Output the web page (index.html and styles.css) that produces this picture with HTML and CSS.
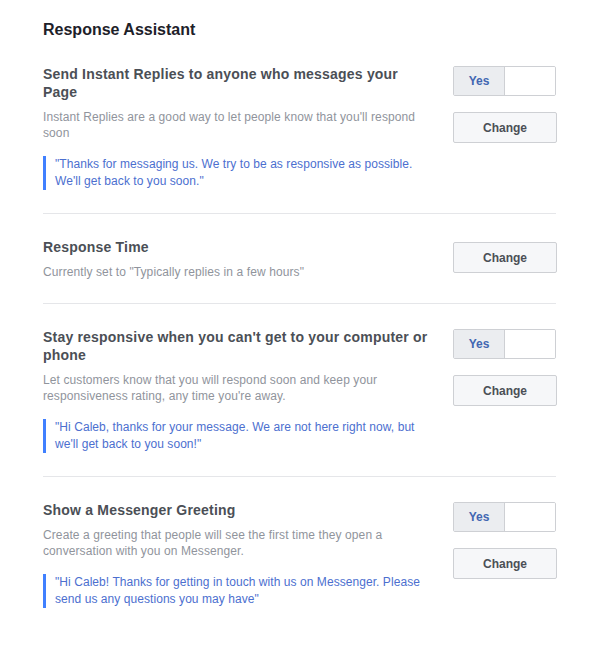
FILE: index.html
```html
<!DOCTYPE html>
<html lang="en">
<head>
    <meta charset="UTF-8">
    <title>Response Assistant</title>
    <link rel="stylesheet" href="styles.css">
</head>
<body>
    <div class="panel">
        <h1>Response Assistant</h1>

        <section class="setting">
            <div class="setting-text">
                <h2>Send Instant Replies to anyone who messages your Page</h2>
                <p class="desc">Instant Replies are a good way to let people know that you'll respond soon</p>
                <blockquote>"Thanks for messaging us. We try to be as responsive as possible. We'll get back to you soon."</blockquote>
            </div>
            <div class="setting-actions">
                <div class="toggle"><span class="toggle-on">Yes</span><span class="toggle-off"></span></div>
                <button class="btn">Change</button>
            </div>
        </section>

        <section class="setting">
            <div class="setting-text">
                <h2>Response Time</h2>
                <p class="desc">Currently set to "Typically replies in a few hours"</p>
            </div>
            <div class="setting-actions single">
                <button class="btn">Change</button>
            </div>
        </section>

        <section class="setting">
            <div class="setting-text">
                <h2>Stay responsive when you can't get to your computer or phone</h2>
                <p class="desc">Let customers know that you will respond soon and keep your responsiveness rating, any time you're away.</p>
                <blockquote>"Hi Caleb, thanks for your message. We are not here right now, but we'll get back to you soon!"</blockquote>
            </div>
            <div class="setting-actions">
                <div class="toggle"><span class="toggle-on">Yes</span><span class="toggle-off"></span></div>
                <button class="btn">Change</button>
            </div>
        </section>

        <section class="setting">
            <div class="setting-text">
                <h2>Show a Messenger Greeting</h2>
                <p class="desc">Create a greeting that people will see the first time they open a conversation with you on Messenger.</p>
                <blockquote>"Hi Caleb! Thanks for getting in touch with us on Messenger. Please send us any questions you may have"</blockquote>
            </div>
            <div class="setting-actions">
                <div class="toggle"><span class="toggle-on">Yes</span><span class="toggle-off"></span></div>
                <button class="btn">Change</button>
            </div>
        </section>
    </div>
</body>
</html>
```

FILE: styles.css
```css
:root {
    --title: #4b4f56;
    --muted: #90949c;
    --quote: #4c6fcf;
    --accent: #4080ff;
    --line: #e5e6e9;
    --border: #ced0d4;
}

* {
    margin: 0;
    padding: 0;
    box-sizing: border-box;
}

body {
    font-family: 'Liberation Sans', Arial, sans-serif;
    background: #fff;
    color: var(--title);
}

.panel {
    width: 556px;
    padding: 20px 0 0 43px;
}

h1 {
    font-size: 16px;
    line-height: 20px;
    font-weight: bold;
    color: #1d2129;
    margin-bottom: 15px;
}

.setting {
    display: flex;
    gap: 20px;
    padding: 24px 0 23px;
    border-bottom: 1px solid var(--line);
}

.setting:first-of-type {
    padding-top: 10px;
}

.setting:last-of-type {
    border-bottom: none;
}

.setting-text {
    width: 390px;
}

h2 {
    font-size: 14px;
    line-height: 18px;
    font-weight: bold;
    color: var(--title);
    letter-spacing: 0.2px;
    margin-bottom: 8px;
}

.desc {
    font-size: 12px;
    line-height: 16px;
    letter-spacing: 0.1px;
    color: var(--muted);
}

blockquote {
    margin-top: 15px;
    padding-left: 9px;
    border-left: 3px solid var(--accent);
    font-size: 12px;
    line-height: 17px;
    letter-spacing: 0.06px;
    color: var(--quote);
}

.setting-actions {
    width: 103px;
    display: flex;
    flex-direction: column;
    gap: 16px;
    padding-top: 1px;
}

.setting-actions.single {
    padding-top: 4px;
}

.toggle {
    display: flex;
    height: 30px;
    width: 103px;
    border: 1px solid var(--border);
    border-radius: 2px;
    overflow: hidden;
}

.toggle-on {
    width: 51px;
    background: #ebedf0;
    border-right: 1px solid var(--border);
    color: #4267b2;
    font-size: 12px;
    font-weight: bold;
    display: flex;
    align-items: center;
    justify-content: center;
}

.toggle-off {
    flex: 1;
    background: #fff;
}

.btn {
    height: 31px;
    width: 104px;
    background: #f6f7f9;
    border: 1px solid var(--border);
    border-radius: 2px;
    font-family: inherit;
    font-size: 12px;
    font-weight: bold;
    color: var(--title);
    cursor: pointer;
}
```
